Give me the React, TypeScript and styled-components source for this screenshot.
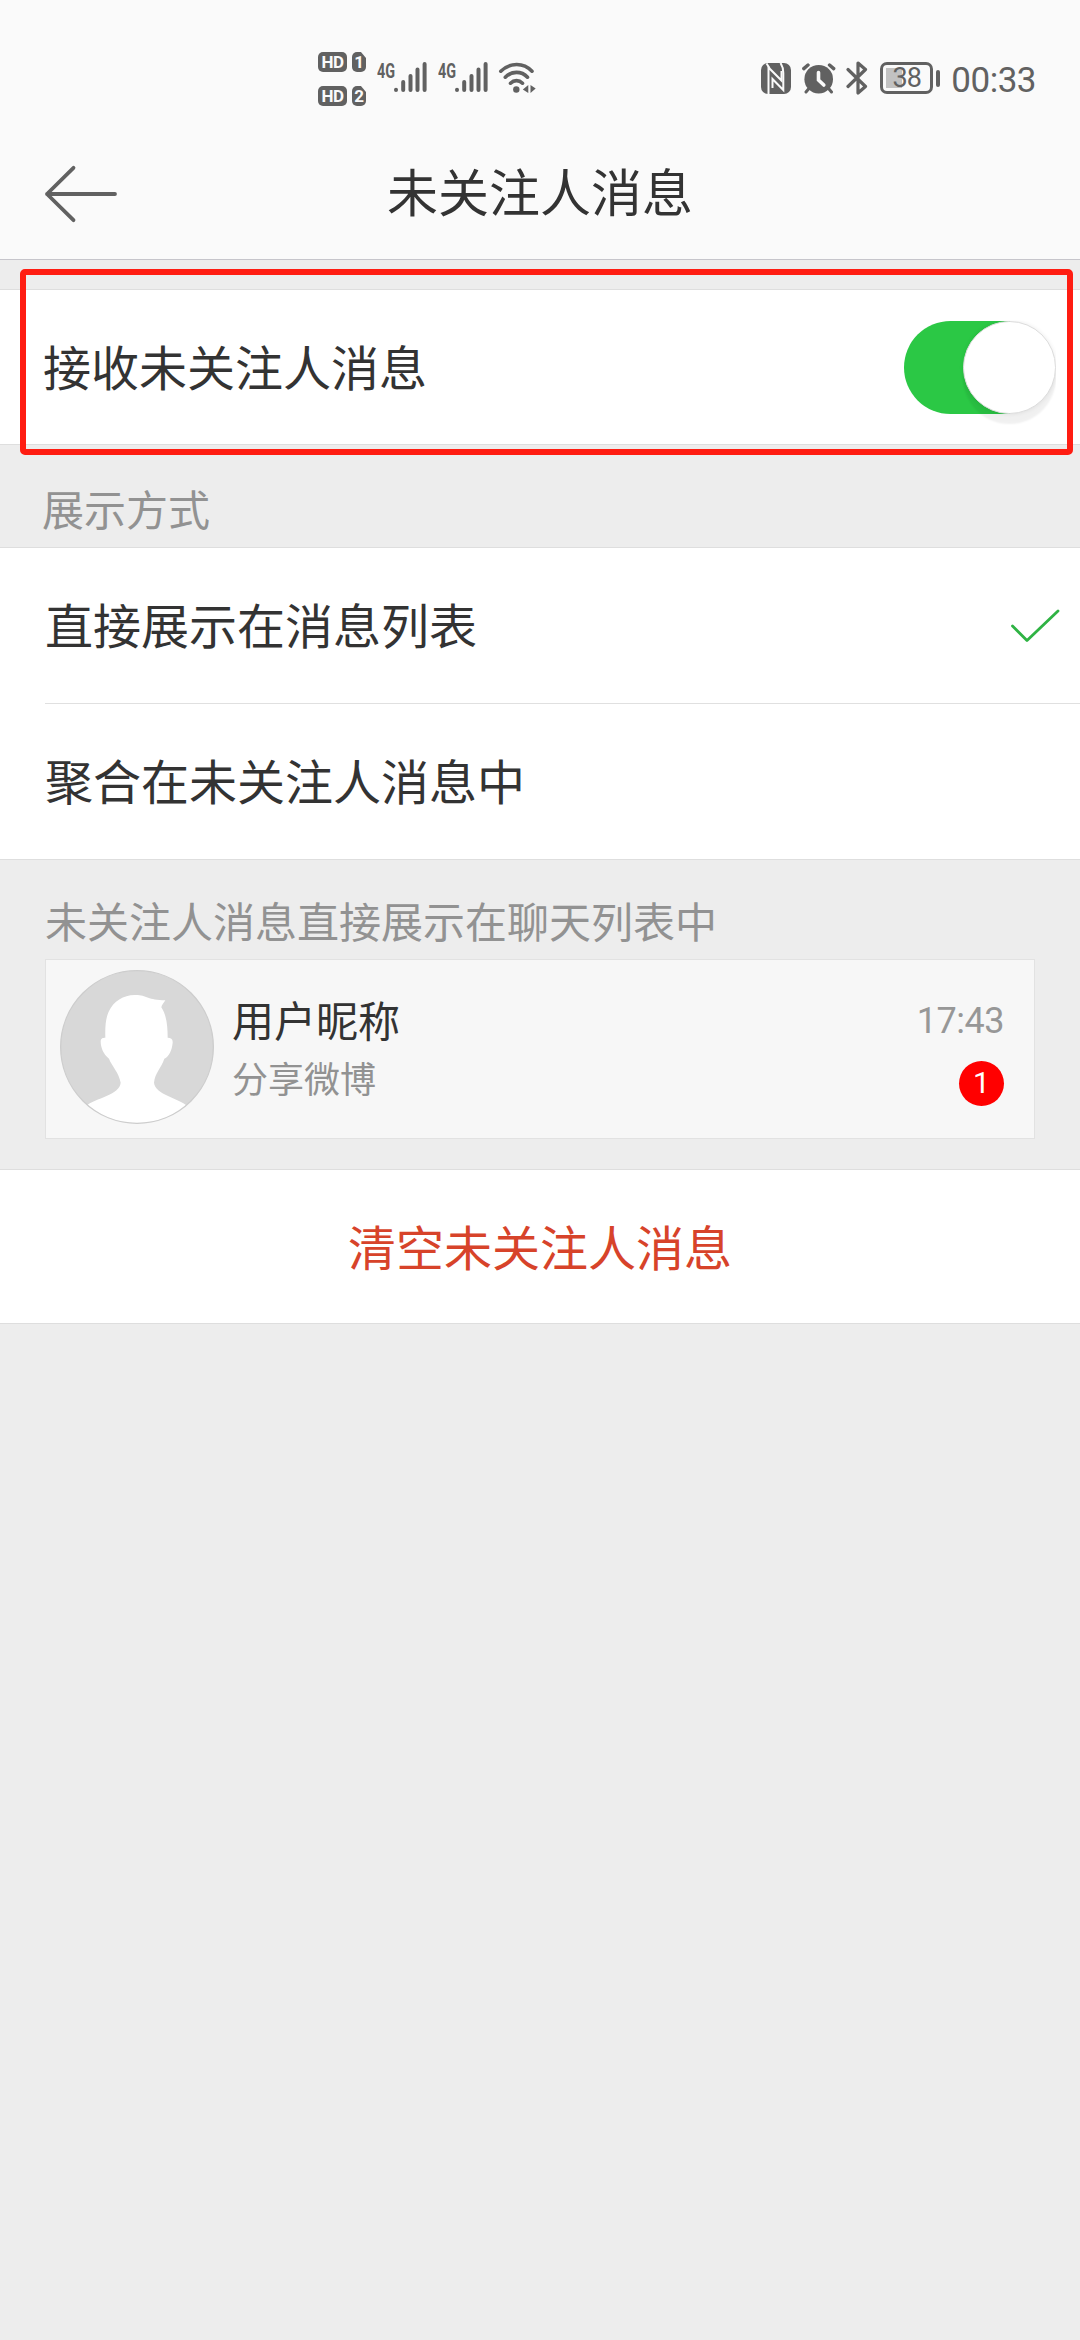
import React from 'react';
import styled, { createGlobalStyle } from 'styled-components';

const CJK = '"Noto Sans CJK SC", sans-serif';
const GREY = '#616161';

const GlobalStyle = createGlobalStyle`
  * { box-sizing: border-box; }
  body { margin: 0; background: #ededed; font-family: ${CJK}; }
  svg { display: block; flex: none; }
`;

const Screen = styled.div`
  display: flex;
  flex-direction: column;
  width: 1080px;
  height: 2340px;
  overflow: hidden;
  background: #ededed;
  color: #333;
`;

const Top = styled.header`
  height: 260px;
  background: #fafafa;
  border-bottom: 1px solid #c6c5cb;
`;

const StatusBar = styled.div`
  display: flex;
  justify-content: space-between;
  height: 156px;
  padding: 52px 44px 0 318px;
  color: ${GREY};
`;

const StatusGroup = styled.div`
  display: flex;
  align-items: flex-start;
`;

const HdColumn = styled.div`
  display: flex;
  flex-direction: column;
  gap: 14px;
  margin-right: 11px;
`;

const HdLine = styled.div`
  display: flex;
  gap: 5px;
`;

const HdTag = styled.span<{ $w: number; $cut?: boolean }>`
  width: ${(p) => p.$w}px;
  height: 20px;
  border-radius: 5px;
  background: ${GREY};
  color: #fafafa;
  font: 700 17px/20px Roboto, sans-serif;
  letter-spacing: -0.5px;
  text-align: center;
  clip-path: ${(p) => (p.$cut ? 'polygon(0 0, 64% 0, 100% 30%, 100% 100%, 0 100%)' : 'none')};
`;

const Signal = styled.div<{ $gap: number }>`
  display: flex;
  margin: 10px ${(p) => p.$gap}px 0 0;
`;

const NetLabel = styled.span`
  width: 17px;
  font: 700 20px/18px Roboto, sans-serif;
  transform: scaleX(0.72);
  transform-origin: 0 0;
`;

const StatusIcon = styled.div<{ $top: number; $gap: number }>`
  margin: ${(p) => p.$top}px ${(p) => p.$gap}px 0 0;
`;

const Battery = styled.div`
  display: flex;
  align-items: center;
  margin: 10px 11px 0 0;
  gap: 3px;
`;

const BatteryBody = styled.div`
  width: 53px;
  height: 32px;
  border: 3px solid ${GREY};
  border-radius: 7px;
  padding: 3px;
`;

const BatteryFill = styled.div`
  height: 20px;
  background: linear-gradient(90deg, #c2c2c2 38%, transparent 38%);
  font: 400 27px/21px Roboto, sans-serif;
  letter-spacing: -0.8px;
  text-align: center;
`;

const BatteryTip = styled.div`
  width: 4px;
  height: 17px;
  border-radius: 2px;
  background: ${GREY};
`;

const Clock = styled.time`
  margin-top: 8px;
  font: 400 35px/41px Roboto, sans-serif;
  letter-spacing: -0.5px;
`;

const NavBar = styled.div`
  display: grid;
  grid-template-columns: 200px 1fr 200px;
  align-items: center;
  height: 76px;
`;

const BackButton = styled.button`
  display: flex;
  border: 0;
  padding: 0 0 0 44px;
  background: none;
`;

const Title = styled.h1`
  margin: 0;
  padding-bottom: 8px;
  font: 400 51px/68px ${CJK};
  text-align: center;
`;

const Section = styled.section<{ $mt?: number }>`
  position: relative;
  margin-top: ${(p) => p.$mt ?? 0}px;
  border-top: 1px solid #dedede;
  border-bottom: 1px solid #dedede;
  background: #fff;
`;

const Row = styled.div<{ $h?: number; $left?: number; $right?: number }>`
  display: flex;
  align-items: center;
  justify-content: space-between;
  height: ${(p) => p.$h ?? 155}px;
  padding: 0 ${(p) => p.$right ?? 20}px 0 ${(p) => p.$left ?? 45}px;
`;

const RowText = styled.span`
  padding-bottom: 5px;
  font: 400 48px/72px ${CJK};
`;

const Divider = styled.hr`
  height: 1px;
  margin: 0 0 0 45px;
  border: 0;
  background: #e0e0e0;
`;

const Highlight = styled.div`
  position: absolute;
  left: 20px;
  top: -21px;
  width: 1053px;
  height: 186px;
  border: 6px solid #ff1d12;
  border-radius: 5px;
  pointer-events: none;
`;

const Toggle = styled.button`
  display: flex;
  justify-content: flex-end;
  width: 152px;
  height: 93px;
  padding: 0;
  border: 0;
  border-radius: 47px;
  background: linear-gradient(90deg, #2bc845 70%, #fff 70%);
  clip-path: inset(0 0 -20px 0);
`;

const Knob = styled.span`
  width: 93px;
  height: 93px;
  border-radius: 50%;
  border: 1px solid #dcdcdc;
  background: #fff;
  box-shadow: 0 10px 2px rgba(0, 0, 0, 0.06), 0 0 4px rgba(0, 0, 0, 0.08);
`;

const Label = styled.div<{ $h: number; $left: number; $pt: number }>`
  height: ${(p) => p.$h}px;
  padding: ${(p) => p.$pt}px 0 0 ${(p) => p.$left}px;
  color: #929292;
  font: 400 42px/60px ${CJK};
`;

const Card = styled.div`
  display: flex;
  width: 990px;
  height: 180px;
  margin-left: 45px;
  padding: 10px 30px 0 14px;
  border: 1px solid #e2e2e2;
  background: #f7f7f7;
`;

const CardText = styled.div`
  display: flex;
  flex: 1;
  flex-direction: column;
  padding: 18px 0 0 18px;
`;

const Nick = styled.span`
  font: 400 42px/62px ${CJK};
`;

const Preview = styled.span`
  color: #929292;
  font: 400 36px/54px ${CJK};
`;

const Meta = styled.div`
  display: flex;
  flex-direction: column;
  align-items: flex-end;
  padding-top: 30px;
`;

const Time = styled.time`
  color: #979797;
  font: 400 36px/42px Roboto, sans-serif;
  letter-spacing: -0.5px;
`;

const Badge = styled.span`
  width: 45px;
  height: 45px;
  margin-top: 19px;
  border-radius: 50%;
  background: #f00;
  color: #fff;
  font: 400 30px/44px Roboto, sans-serif;
  text-align: center;
`;

const ClearButton = styled.button`
  display: block;
  width: 100%;
  height: 153px;
  border: 0;
  padding: 0 0 4px;
  background: none;
  color: #d7432a;
  font: 400 48px/72px ${CJK};
  text-align: center;
`;

const Bars = () => (
  <svg width="33" height="31" viewBox="0 0 33 31" stroke={GREY} strokeWidth="4" strokeLinecap="round">
    <path d="M2 28V27.8M9.2 28V20M16.5 28V14M23.5 28V7.5M30.6 28V2" />
  </svg>
);

const Wifi = () => (
  <svg width="40" height="32" viewBox="0 0 40 32" fill="none" stroke={GREY} strokeWidth="3.600" strokeLinecap="round">
    <path d="M2.8 9.2C12 .3 25.500 .3 34 9.200M7.300 15.200C13.500 8.700 23.500 8.700 29.500 15.200M12.500 21.200C16 17.700 21 17.700 24.500 21.200" />
    <circle cx="18.300" cy="27.500" r="3.200" fill={GREY} stroke="none" />
    <path d="M30.300 23v8l-5.500-3.500zM32.500 23v8l5.200-4.500z" fill={GREY} stroke="none" />
  </svg>
);

const Nfc = () => (
  <svg width="30" height="31" viewBox="0 0 30 31">
    <rect width="30" height="31" rx="7" fill={GREY} />
    <g fill="none" stroke="#fafafa" strokeWidth="2">
      <path d="M7.500 31V4.500L20.500 17.500V8" />
      <path d="M5.500 0.500L8.500 5" />
      <path d="M19.500 0C21.500 3 22.300 6 22.300 10V27L11.500 16V25" />
    </g>
  </svg>
);

const Alarm = () => (
  <svg width="34" height="31" viewBox="0 0 34 31" stroke={GREY} strokeLinecap="round" fill="none">
    <circle cx="16.700" cy="16.200" r="14.300" fill={GREY} stroke="none" />
    <path d="M1.800 5.600L6 2M27.500 2l4.200 3.600" strokeWidth="3.400" />
    <path d="M6.500 26L4 29M27 26l2.500 3" strokeWidth="3" />
    <path d="M16.500 9.500V17l5.300 5" stroke="#fafafa" strokeWidth="3.600" />
  </svg>
);

const Bluetooth = () => (
  <svg width="22" height="34" viewBox="0 0 22 34" fill="none" stroke={GREY} strokeWidth="3.200" strokeLinejoin="round" strokeLinecap="round">
    <path d="M2 8.500L19.500 25.500L12 32V2L19.500 8.500L2 25.500" />
  </svg>
);

const Avatar = () => (
  <svg width="154" height="154" viewBox="181 389 462 462">
    <defs>
      <clipPath id="face">
        <circle cx="412" cy="620" r="229" />
      </clipPath>
    </defs>
    <circle cx="412" cy="620" r="229" fill="#d8d8d8" />
    <path
      clipPath="url(#face)"
      fill="#fff"
      d="M317 592C316 560 318 534 327 514C342 482 371 465 405 464C441 463 444 480 497 480C493 488 486 493 485 501C501 525 504 558 504 592C514 592 520 596 519 607C517 628 509 648 494 655C485 683 466 697 463 727C466 762 535 773 564 797V860H258V797C288 773 360 764 363 727C358 697 336 676 328 655C311 642 303 622 303 603C303 594 309 592 317 592Z"
    />
    <circle cx="412" cy="620" r="229" fill="none" stroke="#cdcdcd" strokeWidth="4" />
  </svg>
);

export default function App() {
  return (
    <Screen>
      <GlobalStyle />
      <Top>
        <StatusBar>
          <StatusGroup>
            <HdColumn>
              {['1', '2'].map((sim) => (
                <HdLine key={sim}>
                  <HdTag $w={29}>HD</HdTag>
                  <HdTag $w={14} $cut>{sim}</HdTag>
                </HdLine>
              ))}
            </HdColumn>
            <Signal $gap={11}>
              <NetLabel>4G</NetLabel>
              <Bars />
            </Signal>
            <Signal $gap={10}>
              <NetLabel>4G</NetLabel>
              <Bars />
            </Signal>
            <StatusIcon $top={10} $gap={0}>
              <Wifi />
            </StatusIcon>
          </StatusGroup>
          <StatusGroup>
            <StatusIcon $top={11} $gap={11}><Nfc /></StatusIcon>
            <StatusIcon $top={11} $gap={10}><Alarm /></StatusIcon>
            <StatusIcon $top={9} $gap={12}><Bluetooth /></StatusIcon>
            <Battery>
              <BatteryBody><BatteryFill>38</BatteryFill></BatteryBody>
              <BatteryTip />
            </Battery>
            <Clock>00:33</Clock>
          </StatusGroup>
        </StatusBar>
        <NavBar>
          <BackButton aria-label="返回">
            <svg width="74" height="58" viewBox="0 0 74 58" fill="none" stroke="#616161" strokeWidth="3.800" strokeLinecap="round" strokeLinejoin="round">
              <path d="M29.500 2.800L3 29L29.500 55.200M3 29H71" />
            </svg>
          </BackButton>
          <Title>未关注人消息</Title>
        </NavBar>
      </Top>

      <Section $mt={29}>
        <Row $h={154} $left={43} $right={24}>
          <RowText>接收未关注人消息</RowText>
          <Toggle role="switch" aria-checked="true"><Knob /></Toggle>
        </Row>
        <Highlight />
      </Section>

      <Label $h={102} $left={42} $pt={33}>展示方式</Label>

      <Section>
        <Row>
          <RowText>直接展示在消息列表</RowText>
          <svg width="51" height="36" viewBox="0 0 51 36" fill="none" stroke="#2fb344" strokeWidth="2.800" strokeLinecap="round" strokeLinejoin="round">
            <path d="M3.500 18L18 32.500L49 3" />
          </svg>
        </Row>
        <Divider />
        <Row>
          <RowText>聚合在未关注人消息中</RowText>
        </Row>
      </Section>

      <Label $h={99} $left={45} $pt={30}>未关注人消息直接展示在聊天列表中</Label>
      <Card>
        <Avatar />
        <CardText>
          <Nick>用户昵称</Nick>
          <Preview>分享微博</Preview>
        </CardText>
        <Meta>
          <Time>17:43</Time>
          <Badge>1</Badge>
        </Meta>
      </Card>

      <Section $mt={30}>
        <ClearButton>清空未关注人消息</ClearButton>
      </Section>
    </Screen>
  );
}
